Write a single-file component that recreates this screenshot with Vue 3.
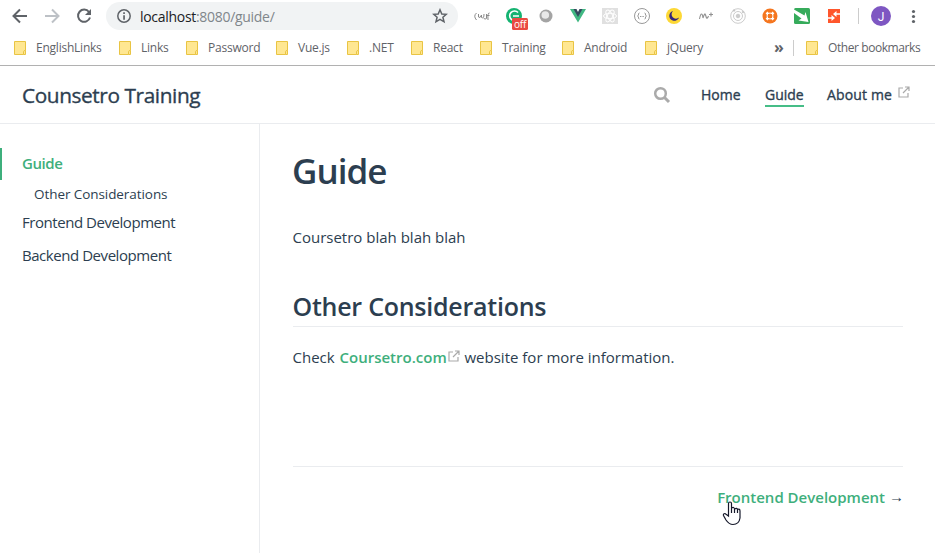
<script setup>
const bookmarks = [
  { label: 'EnglishLinks', width: 105 },
  { label: 'Links', width: 67 },
  { label: 'Password', width: 90 },
  { label: 'Vue.js', width: 71 },
  { label: '.NET', width: 64 },
  { label: 'React', width: 69 },
  { label: 'Training', width: 82 },
  { label: 'Android', width: 83 },
  { label: 'jQuery', width: 120 },
]
const folder = 'M.5 .5H11.5V9.5M.5 .5V13.5H9.5V10.5Q9.5 9.5 11.5 9.5V13.5H9.5'
</script>

<template>
  <div class="window">
    <header class="browser">
      <div class="toolbar">
        <svg class="nav-icons" width="106" height="32" viewBox="0 0 106 32" fill="none" stroke-width="2">
          <path d="M27 16H14M20 9.5L13.5 16L20 22.5" stroke="#5f6368" />
          <path d="M45 16H58M52 9.5L58.500 16L52 22.500" stroke="#bdc1c6" />
          <path d="M89 12A6.100 6.100 0 1 0 90 17.500" stroke="#5f6368" />
          <path d="M91 9V15H85Z" fill="#5f6368" />
        </svg>
        <div class="address">
          <svg width="16" height="16" viewBox="0 0 16 16"><circle cx="8" cy="8" r="6.2" fill="none" stroke="#5f6368" stroke-width="1.500" /><path d="M7.200 4.300h1.700V6H7.200ZM7.200 7.200h1.700v4.500H7.200Z" fill="#5f6368" /></svg>
          <span class="url">localhost<span>:8080/guide/</span></span>
          <svg class="star" width="16" height="16" viewBox="0 0 16 16" fill="none" stroke="#5f6368" stroke-width="1.500"><path d="M8 1.800L9.800 6L14.300 6.300L10.900 9.300L12 13.800L8 11.400L4 13.800L5.100 9.300L1.700 6.300L6.200 6Z" /></svg>
        </div>
        <svg class="extensions" width="477" height="32" viewBox="458 0 477 32">
          <g fill="none" stroke="#8a8a8a" stroke-width="1"><path d="M476.500 13Q473 16 476.500 20M478.500 14V17Q480 19 481.500 15V17.500Q484 19 484 14M486.500 14V18.500Q485 20 483.500 18M489.500 13Q487.500 12.500 488 20M486 15.500H489.500" /></g>
          <circle cx="514" cy="16" r="8" fill="#15b371" />
          <path d="M518 12.500A4.800 4.800 0 1 0 518 19M513 16H519" fill="none" stroke="#fff" stroke-width="1.600" />
          <rect x="512" y="18" width="16" height="12" rx="1.500" fill="#ea4a41" />
          <text x="520" y="27.500" class="badge">off</text>
          <circle cx="546" cy="16" r="6.500" fill="#a4a4a4" /><circle cx="545.300" cy="15" r="3.800" fill="#e8e8e8" />
          <path d="M570 9H575L578 14L581 9H586L578 22.500Z" fill="#41b883" /><path d="M573.500 9H576.500L578 12L579.500 9H582.500L578 17Z" fill="#34495e" />
          <rect x="602" y="8" width="16" height="16" fill="#e0e0e0" />
          <g fill="none" stroke="#fff"><ellipse cx="610" cy="16" rx="6.500" ry="2.700" /><ellipse cx="610" cy="16" rx="6.500" ry="2.700" transform="rotate(60 610 16)" /><ellipse cx="610" cy="16" rx="6.500" ry="2.700" transform="rotate(120 610 16)" /></g>
          <g fill="none" stroke="#999"><circle cx="642" cy="16" r="7.500" /><path d="M639.500 13Q638 13 638.500 15L637.500 16L638.500 17Q638 19 639.500 19M644.500 13Q646 13 645.500 15L646.500 16L645.500 17Q646 19 644.500 19" /><path d="M640 16.500h4" stroke-dasharray="1 .6" /></g>
          <circle cx="674" cy="16" r="8" fill="#fdd835" /><path d="M673 11A5 5 0 1 0 679 17.500A4 4 0 0 1 673 11" fill="#34257c" />
          <path d="M699.500 19Q700.500 14 701.500 14T703 18Q704.500 13.500 705 14T706.500 18Q707.500 18.500 708.500 16M709 14.500h4M711 12.500v4" fill="none" stroke="#929292" stroke-width="1.100" />
          <g fill="none" stroke="#ccc"><circle cx="738" cy="16" r="7.300" /><circle cx="738" cy="16" r="4.500" /><circle cx="738" cy="16" r="1.800" fill="#ccc" /><circle cx="734" cy="10.500" r=".8" fill="#aaa" /><circle cx="743" cy="12" r=".8" fill="#aaa" /></g>
          <circle cx="770" cy="16" r="7.500" fill="#f5761f" /><circle cx="770" cy="16" r="3" fill="none" stroke="#fff" /><path d="M766.500 12.500l1.500 1.500M773.500 12.500L772 14M766.500 19.500L768 18M773.500 19.500L772 18" stroke="#fff" stroke-width="2.500" />
          <rect x="794" y="8" width="16" height="16" rx="1.500" fill="#36ab5b" /><path d="M794 9.500L804.500 15.500L805.500 12L808.500 22L798.500 20.500L801.500 18.500L794 13Z" fill="#fff" />
          <rect x="828" y="9" width="12" height="14" fill="#ff562c" /><path d="M840 14H835M828 18H833" stroke="#fff" stroke-width="1.300" /><path d="M836.500 11L833 14L836.500 17ZM831.500 15L835 18L831.500 21Z" fill="#fff" />
          <path d="M858.500 8V24" stroke="#ccc" /><circle cx="881" cy="16" r="10" fill="#7e57c2" /><text x="881" y="20.500" class="avatar">J</text>
          <g fill="#5f6368"><circle cx="913.500" cy="11.500" r="1.600" /><circle cx="913.500" cy="16.500" r="1.600" /><circle cx="913.500" cy="21.500" r="1.600" /></g>
        </svg>
      </div>
      <nav class="bookmarks">
        <span v-for="item in bookmarks" :key="item.label" class="bookmark" :style="{ width: item.width + 'px' }">
          <svg width="12" height="14" viewBox="0 0 12 14"><path d="M.5 .5H11.500V13.500H.5Z" fill="#ffe792" /><path :d="folder" fill="none" stroke="#e9c443" /></svg>{{ item.label }}
        </span>
        <span class="more">»</span>
        <span class="bookmark other"><svg width="12" height="14" viewBox="0 0 12 14"><path d="M.5 .5H11.500V13.500H.5Z" fill="#ffe792" /><path :d="folder" fill="none" stroke="#e9c443" /></svg>Other bookmarks</span>
      </nav>
    </header>
    <header class="site-header">
      <div class="brand">Counsetro Training</div>
      <nav class="site-nav">
        <svg class="search" width="18" height="18" viewBox="0 0 18 18" fill="none" stroke="#aaa"><circle cx="7.500" cy="7.500" r="5.300" stroke-width="2.500" /><path d="M11.500 11.500L16 16" stroke-width="3" /></svg>
        <a class="home">Home</a><a class="active">Guide</a><a class="about">About me</a>
        <svg class="outbound" width="12" height="12" viewBox="0 0 12 12" fill="none" stroke="#aaa"><path d="M5 2H1V11H10V7M7 1H11V5M11 1L5 7" stroke-width="1.200" /></svg>
      </nav>
    </header>
    <div class="page">
      <aside><a class="current">Guide</a><a class="sub">Other Considerations</a><a class="front">Frontend Development</a><a class="back">Backend Development</a></aside>
      <main>
        <h1>Guide</h1>
        <p class="intro">Coursetro blah blah blah</p>
        <h2>Other Considerations</h2>
        <p class="info"><span class="check">Check</span><a>Coursetro.com</a><svg class="outbound" width="12" height="12" viewBox="0 0 12 12" fill="none" stroke="#aaa"><path d="M5 2H1V11H10V7M7 1H11V5M11 1L5 7" stroke-width="1.200" /></svg><span class="rest">website for more information.</span></p>
        <footer><a>Frontend Development</a><span class="arrow">→</span>
          <svg class="cursor" width="20" height="25" viewBox="0 0 20 25"><path d="M6.500 15V2.500Q6.500 1 8 1T9.500 2.500V7Q12 5.500 12.500 8Q15 6.500 15.500 8.500Q18 7.500 18 10V17Q17 23.500 11 23.500Q7 23.500 4 19L1.500 14.500Q1 12.500 3 12.500L6.500 15ZM9.500 7V12M12.500 8V12M15.500 9V12" fill="#fff" stroke="#15182a" stroke-width="1.200" /></svg>
        </footer>
      </main>
    </div>
  </div>
</template>

<style>
body { margin: 0; background: #fff; overflow: hidden; }
</style>
<style scoped>
* { box-sizing: border-box; }
.window { width: 935px; height: 553px; font-family: "Open Sans", "Noto Sans", sans-serif; color: #2c3e50; white-space: nowrap; }
svg { display: block; flex: none; }
.browser { height: 66px; border-bottom: 1px solid #b1b1b1; }
.toolbar { display: flex; height: 32px; align-items: center; }
.address { width: 352px; height: 28px; border-radius: 14px; background: #f1f3f4; display: flex; align-items: center; padding: 0 10px; }
.url { margin-left: 8px; font-size: 14px; color: #202124; letter-spacing: -.3px; }
.url span { color: #80868b; }
.star { margin-left: auto; }
.badge { font-size: 10px; fill: #fff; text-anchor: middle; letter-spacing: -.2px; }
.avatar { font-family: Roboto, sans-serif; font-size: 12px; fill: #fff; text-anchor: middle; }
.bookmarks { display: flex; height: 32px; align-items: center; padding-left: 14px; font-size: 12px; color: #5f6368; letter-spacing: -.23px; }
.bookmark { display: flex; align-items: center; gap: 10px; flex: none; line-height: 16px; }
.more { margin-left: 9px; width: 19px; font-weight: 700; font-size: 16px; line-height: 16px; margin-top: -2px; }
.other { border-left: 1px solid #ccc; padding-left: 12px; height: 16px; letter-spacing: -.42px; }
.site-header { height: 58px; border-bottom: 1px solid #eaecef; display: flex; align-items: center; padding-left: 22px; }
.brand { font-size: 20.800px; letter-spacing: -.4px; -webkit-text-stroke: .35px currentColor; width: 631px; }
.site-nav { display: flex; align-items: center; font-size: 14px; -webkit-text-stroke: .35px currentColor; }
.site-nav svg { -webkit-text-stroke: 0; }
.site-nav a { height: 24px; line-height: 24px; }
.home { margin-left: 30px; width: 64px; }
.active { width: 39px; border-bottom: 2px solid #46bd87; }
.about { margin-left: 23px; width: 71px; letter-spacing: .15px; }
.site-nav .outbound { margin-top: -5px; }
.page { display: flex; height: 429px; }
aside { width: 260px; border-right: 1px solid #eaecef; padding-top: 24px; display: flex; flex-direction: column; font-size: 15px; letter-spacing: -.45px; }
aside a { padding-left: 22px; height: 33px; line-height: 30px; }
aside .current { height: 32px; border-left: 2px solid #3eaf7c; padding-left: 20px; color: #3eaf7c; font-weight: 600; }
aside .sub { padding-left: 34px; height: 27px; line-height: 29px; font-size: 13.500px; letter-spacing: -.07px; }
main { width: 643px; padding-left: 33px; font-size: 15px; }
h1 { margin: 20px 0 0 -1px; font-size: 35px; line-height: 54px; font-weight: 600; letter-spacing: -1px; }
p { margin: 0 0 0 -.5px; line-height: 26px; }
.intro { margin-top: 26px; }
h2 { margin: 38px 0 0; height: 39px; line-height: 36px; border-bottom: 1px solid #eaecef; font-size: 25px; font-weight: 600; letter-spacing: -.25px; text-indent: -.5px; }
.info { margin-top: 17px; display: flex; }
.check { width: 47px; }
.info a { color: #3eaf7c; font-weight: 600; width: 108px; }
.info .outbound { margin-top: 6px; }
.rest { margin-left: 5px; }
footer { position: relative; display: flex; justify-content: flex-end; gap: 4px; margin-top: 96px; padding-top: 17px; border-top: 1px solid #eaecef; line-height: 26px; }
footer a { color: #3eaf7c; font-weight: 600; }
.arrow { width: 14px; font-family: "Liberation Sans", sans-serif; text-align: center; }
.cursor { position: absolute; left: 429px; top: 34px; }
</style>
